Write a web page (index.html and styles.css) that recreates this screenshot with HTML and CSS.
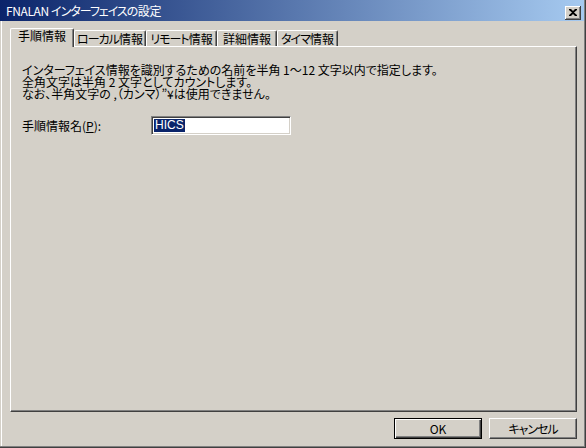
FILE: index.html
```html
<!DOCTYPE html>
<html lang="ja">
<head>
<meta charset="utf-8">
<title>FNALAN インターフェイスの設定</title>
<link rel="stylesheet" href="styles.css">
</head>
<body>
<div class="window">
  <div class="titlebar">
    <span class="title">FNALAN <span class="k">インターフェイス</span>の設定</span>
    <span class="close">
      <svg width="8" height="7" viewBox="0 0 8 7"><path d="M0 0h2l2 2 2-2h2v1L5 3.5 8 6v1H6L4 5 2 7H0V6l3-2.5L0 1z" fill="#000"/></svg>
    </span>
  </div>
  <div class="client">
    <div class="tabs">
      <div class="tab sel w1">手順情報</div>
      <div class="tab w2"><span class="k">ローカル</span>情報</div>
      <div class="tab w3"><span class="k">リモート</span>情報</div>
      <div class="tab w4">詳細情報</div>
      <div class="tab w5"><span class="k">タイマ</span>情報</div>
    </div>
    <div class="panel">
      <p class="desc">インターフェイス情報を識別するための名前を半角 1～12 文字以内で指定します。<br>全角文字は半角 2 文字としてカウントします。<br>なお、半角文字の ,（カンマ）”¥は使用できません。</p>
      <div class="field">
        <span class="label">手順情報名(<u>P</u>):</span>
        <span class="input"><span class="selected">HICS</span></span>
      </div>
    </div>
    <div class="buttons">
      <span class="btn default">OK</span>
      <span class="btn"><span class="k">キャンセル</span></span>
    </div>
  </div>
</div>
</body>
</html>
```
FILE: styles.css
```css
* { box-sizing: border-box; }
html, body { margin: 0; padding: 0; background: #d4d0c8; }
body {
  font-family: "Noto Sans CJK JP", "Liberation Sans", sans-serif;
  font-size: 12px;
  line-height: 12px;
  color: #000;
  font-feature-settings: "palt";
}
.k { letter-spacing: -1px; }
.window {
  width: 586px;
  height: 448px;
  display: flex;
  flex-direction: column;
  background: #d4d0c8;
  border-right: 1px solid #404040;
  border-bottom: 1px solid #404040;
  box-shadow: inset -1px -1px 0 #808080;
}
.titlebar {
  height: 21px;
  margin-right: 1px;
  display: flex;
  align-items: center;
  justify-content: space-between;
  padding: 1px 3px 0 6px;
  background: linear-gradient(to right, #0a246a, #a6caf0);
}
.title { color: #fff; font-size: 12px; letter-spacing: -0.4px; }
.close {
  width: 16px;
  height: 14px;
  margin-top: 3px;
  display: flex;
  align-items: center;
  justify-content: center;
  background: #d4d0c8;
  border-right: 1px solid #404040;
  border-bottom: 1px solid #404040;
  box-shadow: inset 1px 1px 0 #fff, inset -1px -1px 0 #808080;
}
.client {
  flex: 1;
  margin: 0 1px 1px 1px;
  border-left: 1px solid #fff;
  display: flex;
  flex-direction: column;
}
.tabs {
  margin-top: 7px;
  padding-left: 8px;
  height: 18px;
  display: flex;
  align-items: flex-end;
  position: relative;
  z-index: 1;
}
.tab {
  height: 16px;
  padding-top: 2px;
  text-align: center;
  white-space: nowrap;
  background: #d4d0c8;
  border-top: 1px solid #fff;
  border-left: 1px solid #fff;
  border-right: 1px solid #404040;
  border-radius: 2px 2px 0 0;
  box-shadow: inset -1px 0 0 #808080;
}
.tab.sel {
  height: 19px;
  margin-bottom: -1px;
  padding-top: 1px;
}
.w1 { width: 64px; }
.w2 { width: 72px; }
.w3 { width: 71px; }
.w4 { width: 60px; }
.w5 { width: 61px; }
.panel {
  margin-left: 8px;
  width: 567px;
  height: 366px;
  border-top: 1px solid #fff;
  border-left: 1px solid #fff;
  border-right: 1px solid #404040;
  border-bottom: 1px solid #404040;
  box-shadow: inset -1px -1px 0 #808080;
  padding: 17px 0 0 11px;
}
.desc { margin: 0; line-height: 12px; }
.field {
  margin-top: 16px;
  display: flex;
  align-items: center;
}
.label { width: 129px; }
.input {
  width: 140px;
  height: 19px;
  background: #fff;
  border-top: 1px solid #808080;
  border-left: 1px solid #808080;
  border-right: 1px solid #fff;
  border-bottom: 1px solid #fff;
  box-shadow: inset 1px 1px 0 #404040, inset -1px -1px 0 #d4d0c8;
  padding: 2px 0 0 2px;
  display: flex;
}
.selected {
  background: #0a246a;
  color: #fff;
  font-family: "Liberation Sans", sans-serif;
  font-size: 12px;
  line-height: 13px;
  height: 13px;
  padding: 0 1px;
}
.buttons {
  margin-top: 6px;
  padding-right: 7px;
  display: flex;
  justify-content: flex-end;
  gap: 7px;
}
.btn {
  width: 88px;
  height: 21px;
  display: flex;
  align-items: center;
  justify-content: center;
  background: #d4d0c8;
  border-top: 1px solid #fff;
  border-left: 1px solid #fff;
  border-right: 1px solid #404040;
  border-bottom: 1px solid #404040;
  box-shadow: inset -1px -1px 0 #808080;
}
.btn.default {
  border: 1px solid #000;
  box-shadow: inset 1px 1px 0 #fff, inset -1px -1px 0 #404040, inset -2px -2px 0 #808080;
}
```
